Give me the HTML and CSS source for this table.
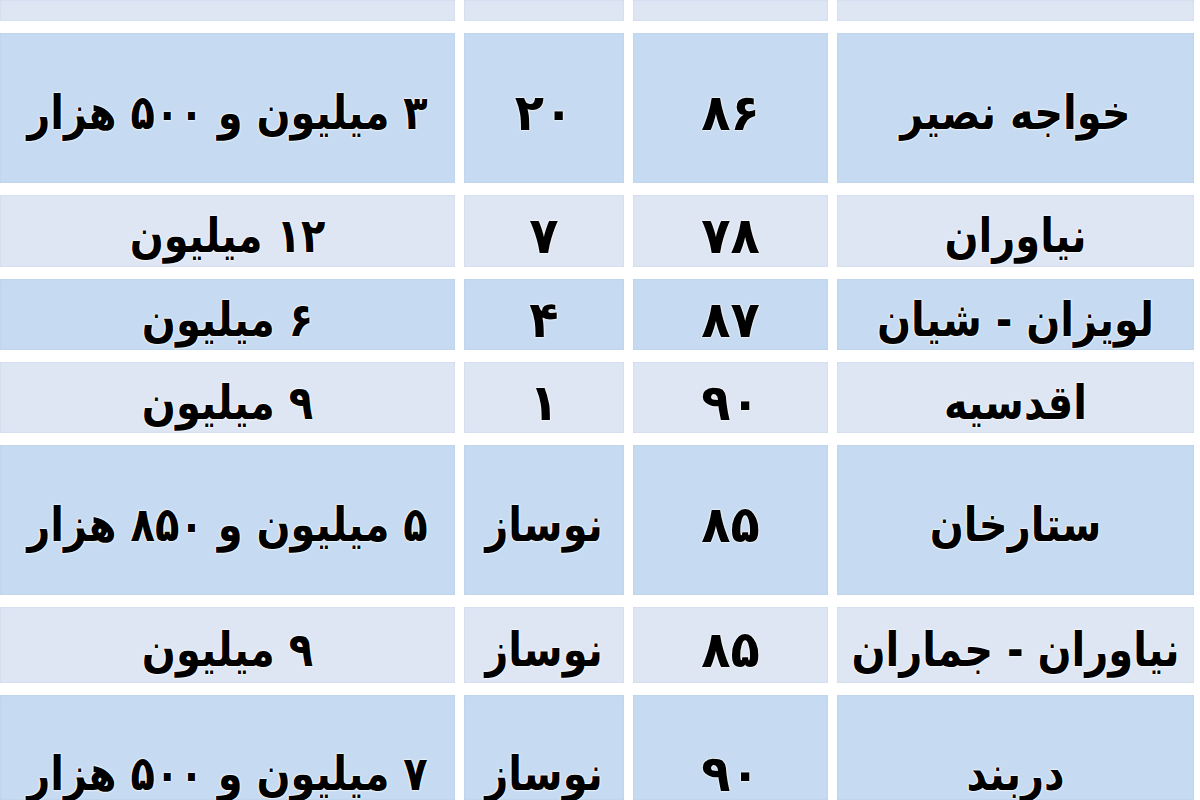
FILE: index.html
```html
<!DOCTYPE html>
<html lang="fa" dir="rtl">
<head>
<meta charset="utf-8">
<title>جدول اجاره</title>
<link rel="stylesheet" href="styles.css">
</head>
<body>
<div class="table">
  <div class="cell light"></div><div class="cell light"></div><div class="cell light"></div><div class="cell light"></div>

  <div class="cell blue"><span class="t">خواجه نصیر</span></div><div class="cell blue num"><span class="t">۸۶</span></div><div class="cell blue num"><span class="t">۲۰</span></div><div class="cell blue"><span class="t">۳ میلیون و ۵۰۰ هزار</span></div>

  <div class="cell light"><span class="t">نیاوران</span></div><div class="cell light num"><span class="t">۷۸</span></div><div class="cell light num"><span class="t">۷</span></div><div class="cell light"><span class="t">۱۲ میلیون</span></div>

  <div class="cell blue"><span class="t">لویزان - شیان</span></div><div class="cell blue num"><span class="t">۸۷</span></div><div class="cell blue num"><span class="t">۴</span></div><div class="cell blue"><span class="t">۶ میلیون</span></div>

  <div class="cell light"><span class="t">اقدسیه</span></div><div class="cell light num"><span class="t">۹۰</span></div><div class="cell light num"><span class="t">۱</span></div><div class="cell light"><span class="t">۹ میلیون</span></div>

  <div class="cell blue"><span class="t">ستارخان</span></div><div class="cell blue num"><span class="t">۸۵</span></div><div class="cell blue"><span class="t">نوساز</span></div><div class="cell blue"><span class="t">۵ میلیون و ۸۵۰ هزار</span></div>

  <div class="cell light"><span class="t">نیاوران - جماران</span></div><div class="cell light num"><span class="t">۸۵</span></div><div class="cell light"><span class="t">نوساز</span></div><div class="cell light"><span class="t">۹ میلیون</span></div>

  <div class="cell blue last"><span class="t">دربند</span></div><div class="cell blue last num"><span class="t">۹۰</span></div><div class="cell blue last"><span class="t">نوساز</span></div><div class="cell blue last"><span class="t">۷ میلیون و ۵۰۰ هزار</span></div>
</div>
</body>
</html>
```

FILE: styles.css
```css
html, body {
  margin: 0;
  padding: 0;
  background: #ffffff;
  overflow: hidden;
}

body {
  width: 1200px;
  height: 800px;
  font-family: "DejaVu Sans", sans-serif;
  font-weight: bold;
  color: #000;
}

.table {
  direction: rtl;
  display: grid;
  grid-template-columns: 357px 195px 160px 455px;
  grid-template-rows: 21px 150px 72px 71px 71px 150px 76px 105px;
  column-gap: 9px;
  row-gap: 12px;
  padding-right: 6px;
}

.cell {
  display: flex;
  align-items: center;
  justify-content: center;
  white-space: nowrap;
  font-size: 40px;
  line-height: 1;
  padding-top: 8px;
  box-sizing: border-box;
  text-shadow: 0 0 2px #fff, 0 0 2px #fff, 0 0 1px #fff;
  box-shadow: inset 0 0 2px rgba(150, 170, 200, 0.35);
}

.cell.num {
  font-size: 48px;
}

.t {
  display: inline-block;
  transform: scaleY(1.18);
}

.cell.num .t {
  transform: scaleY(1.05);
}

.cell.last {
  padding-top: 50px;
}

.blue {
  background: #c6dbf1;
}

.light {
  background: #dee6f4;
}
```
